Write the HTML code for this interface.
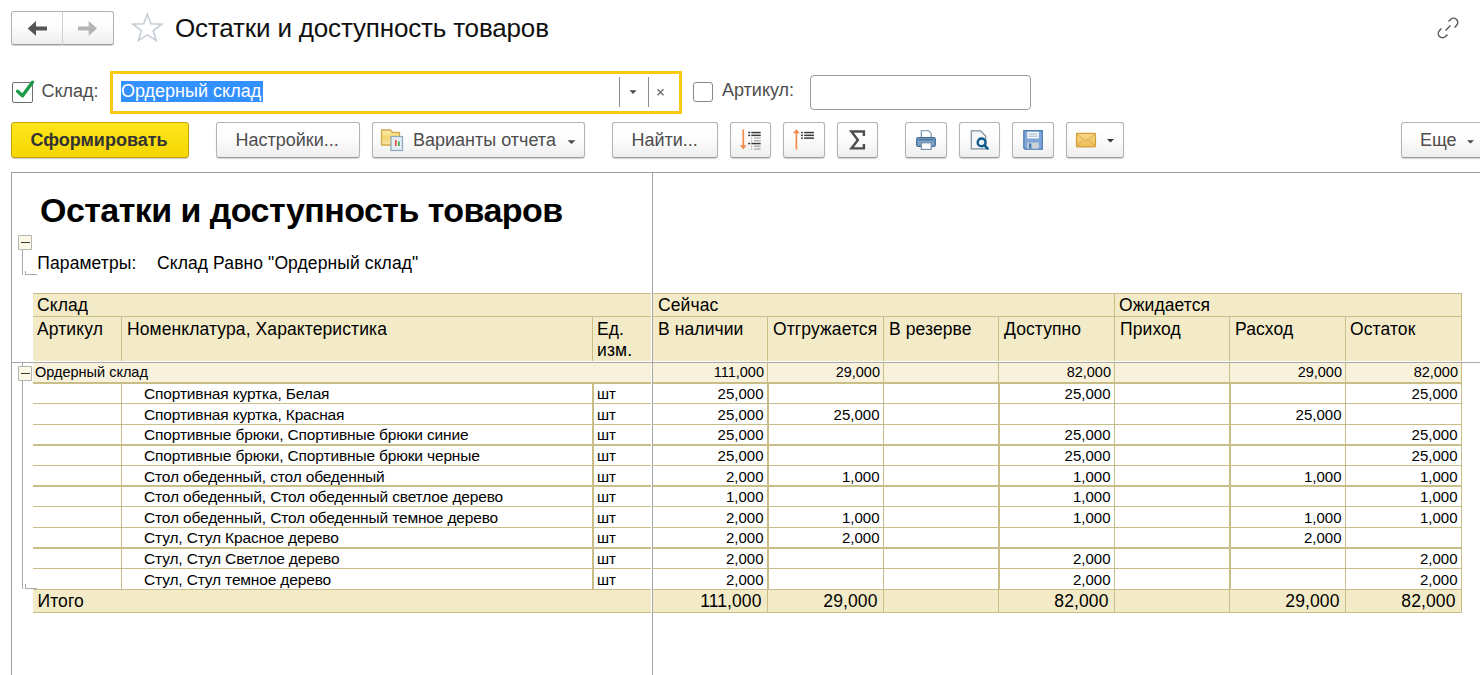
<!DOCTYPE html>
<html><head><meta charset="utf-8"><style>
html,body{margin:0;padding:0;background:#fff;width:1480px;height:675px;overflow:hidden;position:relative;font-family:"Liberation Sans", sans-serif;}
.t{position:absolute;white-space:pre;font-family:"Liberation Sans", sans-serif;}
.btn{position:absolute;box-sizing:border-box;border:1px solid #b3b3b3;border-bottom-color:#9c9c9c;border-radius:3px;background:linear-gradient(#ffffff 0%,#fdfdfd 45%,#eeeeee 100%);box-shadow:0 1px 1px rgba(0,0,0,0.18);}
.ybtn{position:absolute;box-sizing:border-box;border:1px solid #c3a400;border-radius:3px;background:linear-gradient(#fde51c,#f6d600);box-shadow:0 1px 1px rgba(0,0,0,0.2);}
</style></head><body>
<div class="btn" style="left:11px;top:11px;width:103px;height:34px;"></div><div style="position:absolute;left:62px;top:12px;width:1px;height:34px;background:#d0d0d0;"></div><svg style="position:absolute;left:0;top:0" width="120" height="50">
<path d="M27.7 28.4 L36 21 L36 26.4 L47 26.4 L47 30.4 L36 30.4 L36 35.8 Z" fill="#555"/>
<path d="M97 28.4 L88.7 21 L88.7 26.4 L78 26.4 L78 30.4 L88.7 30.4 L88.7 35.8 Z" fill="#b3b3b3"/>
</svg><svg style="position:absolute;left:128px;top:10px" width="38" height="35" viewBox="0 0 38 35">
<path d="M19.3 4.2 L22.9 13.7 L33.8 14.2 L25.2 20.6 L28.2 30.4 L19.3 24.9 L10.4 30.4 L13.4 20.6 L4.8 14.2 L15.7 13.7 Z" fill="none" stroke="#c6cdd4" stroke-width="1.6" stroke-linejoin="miter"/>
</svg><div class="t" style="left:175px;top:15px;font-size:26px;line-height:26px;font-weight:normal;color:#111;letter-spacing:-0.17px;">Остатки и доступность товаров</div><svg style="position:absolute;left:1432px;top:12px" width="32" height="32" viewBox="0 0 32 32">
<g fill="none" stroke="#5c5c5c" stroke-width="1.45" stroke-linecap="butt">
<path d="M16.5 9.5 L18.5 7.5 A4.2 4.2 0 0 1 24.5 13.5 L22.5 15.5"/>
<path d="M15.5 22.5 L13.5 24.5 A4.2 4.2 0 0 1 7.5 18.5 L9.5 16.5"/>
<path d="M13.5 18.5 L18.5 13.5"/>
</g></svg><div style="position:absolute;left:12px;top:82px;width:21px;height:21px;box-sizing:border-box;border:1.5px solid #6f6f6f;border-radius:2px;background:#fff;"></div><svg style="position:absolute;left:8px;top:76px" width="32" height="32" viewBox="0 0 32 32">
<path d="M9.6 15.2 L14.5 19.8 L24.5 6.2" fill="none" stroke="#1d9b48" stroke-width="3.4" stroke-linecap="round" stroke-linejoin="round"/>
</svg><div class="t" style="left:41.5px;top:81.5px;font-size:18px;line-height:18px;font-weight:normal;color:#4d4d4d;">Склад:</div><div style="position:absolute;left:110px;top:71px;width:566px;height:37px;border:3px solid #f9c915;background:#fff;"></div><div style="position:absolute;left:121px;top:81px;width:142px;height:21px;background:#3390ff;"></div><div class="t" style="left:121px;top:81.5px;font-size:18px;line-height:18px;font-weight:normal;color:#fff;">Ордерный склад</div><div style="position:absolute;left:619px;top:77px;width:1px;height:30px;background:#8c8c8c;"></div><div style="position:absolute;left:648px;top:77px;width:1px;height:30px;background:#8c8c8c;"></div><svg style="position:absolute;left:620px;top:80px" width="60" height="24">
<path d="M9.5 10.3 L16.5 10.3 L13 14 Z" fill="#4a4a4a"/>
<path d="M37.5 9.2 L43.5 15.2 M43.5 9.2 L37.5 15.2" stroke="#777" stroke-width="1.6"/>
</svg><div style="position:absolute;left:693px;top:82px;width:18px;height:18px;border:1px solid #888;border-radius:3px;background:#fff;"></div><div class="t" style="left:722px;top:80.5px;font-size:18px;line-height:18px;font-weight:normal;color:#4d4d4d;">Артикул:</div><div style="position:absolute;left:810px;top:75px;width:219px;height:33px;border:1px solid #9a9a9a;border-radius:4px;background:#fff;"></div><div class="ybtn" style="left:11px;top:122px;width:178px;height:36px;"></div><div class="t" style="left:30.5px;top:130.5px;font-size:18px;line-height:18px;font-weight:bold;color:#333;">Сформировать</div><div class="btn" style="left:216px;top:122px;width:144px;height:36px;"></div><div class="t" style="left:235.5px;top:130.5px;font-size:18px;line-height:18px;font-weight:normal;color:#4d4d4d;">Настройки...</div><div class="btn" style="left:372px;top:122px;width:213px;height:36px;"></div><div class="t" style="left:413px;top:130.5px;font-size:18px;line-height:18px;font-weight:normal;color:#4d4d4d;">Варианты отчета</div><svg style="position:absolute;left:378px;top:126px" width="30" height="28" viewBox="0 0 30 28">
<defs><linearGradient id="fg" x1="0" y1="0" x2="0" y2="1"><stop offset="0" stop-color="#fcefb0"/><stop offset="0.5" stop-color="#f2d66e"/><stop offset="1" stop-color="#f7e7a5"/></linearGradient></defs>
<path d="M3.5 4 L12.5 4 L14.5 6.5 L21.5 6.5 L21.5 19 L3.5 19 Z" fill="url(#fg)" stroke="#d2a94a" stroke-width="1.3" stroke-linejoin="round"/>
<rect x="13" y="10.5" width="11.5" height="14" fill="#e3ebf3" stroke="#90a6ba" stroke-width="1.2"/>
<rect x="17" y="14" width="1.6" height="6" fill="#e84a3a"/>
<rect x="20" y="15.5" width="1.8" height="4.5" fill="#4cae4c"/>
</svg><svg style="position:absolute;left:560px;top:134px" width="20" height="12"><path d="M7.5 6.3 L15.5 6.3 L11.5 10 Z" fill="#4a4a4a"/></svg><div class="btn" style="left:612px;top:122px;width:106px;height:36px;"></div><div class="t" style="left:631.5px;top:130.5px;font-size:18px;line-height:18px;font-weight:normal;color:#4d4d4d;">Найти...</div><div class="btn" style="left:730px;top:122px;width:41px;height:36px;"></div><svg style="position:absolute;left:730px;top:122px" width="42" height="36">
<path d="M13.3 7.5 L13.3 26" stroke="#f28a4a" stroke-width="1.7"/>
<path d="M10 23.2 L16.6 23.2 L13.3 27.6 Z" fill="#f28a4a"/>
<g fill="#3a3a3a"><rect x="18.2" y="9.8" width="2" height="1.5"/><rect x="21.3" y="9.8" width="9.4" height="1.5"/>
<rect x="18.2" y="12.6" width="2" height="1.5"/><rect x="21.3" y="12.6" width="9.4" height="1.5"/>
<rect x="18.2" y="20.8" width="2" height="1.5"/><rect x="21.3" y="20.8" width="9.4" height="1.5"/></g>
<g fill="#a8a8a8"><rect x="21" y="15.4" width="1.2" height="1.3"/><rect x="24" y="15.4" width="6.7" height="1.3"/>
<rect x="21" y="18.1" width="1.2" height="1.3"/><rect x="24" y="18.1" width="6.7" height="1.3"/>
<rect x="21" y="23.6" width="1.2" height="1.3"/><rect x="24" y="23.6" width="6.7" height="1.3"/>
<rect x="21" y="26.4" width="1.2" height="1.3"/><rect x="24" y="26.4" width="6.7" height="1.3"/></g>
</svg><div class="btn" style="left:783px;top:122px;width:42px;height:36px;"></div><svg style="position:absolute;left:783px;top:122px" width="42" height="36">
<path d="M13.4 10 L13.4 27.6" stroke="#f28a4a" stroke-width="1.7"/>
<path d="M9.9 11.2 L16.9 11.2 L13.4 7.2 Z" fill="#f28a4a"/>
<g fill="#3a3a3a"><rect x="18.1" y="9.8" width="1.8" height="1.5"/><rect x="21.2" y="9.8" width="9.7" height="1.5"/>
<rect x="18.1" y="12.6" width="1.8" height="1.5"/><rect x="21.2" y="12.6" width="9.7" height="1.5"/>
<rect x="18.1" y="15.4" width="1.8" height="1.5"/><rect x="21.2" y="15.4" width="9.7" height="1.5"/></g>
</svg><div class="btn" style="left:837px;top:122px;width:41px;height:36px;"></div><svg style="position:absolute;left:837px;top:122px" width="42" height="36">
<path d="M26.9 13.9 L26.9 9.5 L14.4 9.5 L20.9 18 L14.4 26.4 L26.9 26.4 L26.9 22" fill="none" stroke="#4d4d4d" stroke-width="2.4" stroke-linejoin="miter"/>
</svg><div class="btn" style="left:905px;top:122px;width:42px;height:36px;"></div><svg style="position:absolute;left:905px;top:122px" width="42" height="36">
<path d="M16.3 8.7 L23.5 8.7 L26.2 11.4 L26.2 16 L16.3 16 Z" fill="#fff" stroke="#6d8aa5" stroke-width="1.1"/>
<rect x="11.7" y="15.6" width="18.6" height="8.8" rx="1.6" fill="#7fa3c8" stroke="#3f6e98" stroke-width="1.3"/>
<rect x="13.5" y="17.2" width="15" height="1.2" fill="#3f6e98"/>
<rect x="16.3" y="20.8" width="9.9" height="6.6" fill="#fff" stroke="#6d8aa5" stroke-width="1.1"/>
</svg><div class="btn" style="left:959px;top:122px;width:41px;height:36px;"></div><svg style="position:absolute;left:959px;top:122px" width="42" height="36">
<path d="M12.3 8.8 L21.5 8.8 L26.7 14 L26.7 26.9 L12.3 26.9 Z" fill="#f4f6f8" stroke="#7d8d9c" stroke-width="1.2"/>
<circle cx="22.6" cy="20.4" r="3.9" fill="#e9f1f7" stroke="#0d5b8c" stroke-width="2.4"/>
<path d="M25.3 23.2 L28.6 26.6" stroke="#0d5b8c" stroke-width="2.6" stroke-linecap="round"/>
</svg><div class="btn" style="left:1012px;top:122px;width:42px;height:36px;"></div><svg style="position:absolute;left:1012px;top:122px" width="42" height="36">
<path d="M11.8 8.6 L30.3 8.6 L30.3 27.2 L13 27.2 L11.8 26 Z" fill="#7ea6d8" stroke="#4b79b2" stroke-width="1.2"/>
<rect x="15.3" y="9.8" width="11.5" height="6.6" fill="#fff"/>
<rect x="16.5" y="11.5" width="9" height="0.9" fill="#88a6c8"/><rect x="16.5" y="13.7" width="9" height="0.9" fill="#88a6c8"/>
<rect x="15.3" y="20.5" width="11.5" height="6.2" fill="#c9d1d6"/>
<rect x="17" y="21.5" width="2.4" height="5.2" fill="#4b79b2"/>
</svg><div class="btn" style="left:1066px;top:122px;width:58px;height:36px;"></div><svg style="position:absolute;left:1066px;top:122px" width="58" height="36">
<defs><linearGradient id="eg" x1="0" y1="0" x2="0" y2="1"><stop offset="0" stop-color="#f7d98b"/><stop offset="1" stop-color="#ecbc55"/></linearGradient></defs>
<rect x="10.5" y="11.3" width="19" height="13.5" rx="0.8" fill="url(#eg)" stroke="#d39d38" stroke-width="1.2"/>
<path d="M11 12 L20 19.3 L29 12 M11 24.3 L17 18.3 M29 24.3 L23 18.3" fill="none" stroke="#d8a445" stroke-width="0.9"/>
<path d="M41 17 L48 17 L44.5 20.6 Z" fill="#333"/>
</svg><div class="btn" style="left:1401px;top:122px;width:100px;height:36px;"></div><div class="t" style="left:1420px;top:130.5px;font-size:18px;line-height:18px;font-weight:normal;color:#4d4d4d;">Еще</div><svg style="position:absolute;left:1460px;top:134px" width="20" height="12"><path d="M7 6.2 L14 6.2 L10.5 9.6 Z" fill="#4a4a4a"/></svg><div style="position:absolute;left:11px;top:172px;width:1469px;height:503px;border-left:1px solid #a0a0a0;border-top:1px solid #a0a0a0;box-sizing:border-box;"></div><div class="t" style="left:40px;top:193px;font-size:34px;line-height:34px;font-weight:bold;color:#000;letter-spacing:-0.55px;">Остатки и доступность товаров</div><div style="position:absolute;left:18px;top:235px;width:14px;height:15px;box-sizing:border-box;border:1px solid #b5b5b5;background:#fbf8e6;border-radius:1px;box-shadow:0 0 1px rgba(0,0,0,0.15);"></div><div style="position:absolute;left:20.5px;top:241.6px;width:9px;height:1.6px;background:#3a3a3a;"></div><div style="position:absolute;left:22px;top:250px;width:1px;height:25px;background:#a9a9a9;"></div><div style="position:absolute;left:25px;top:271px;width:1px;height:4px;background:#a9a9a9;"></div><div style="position:absolute;left:25px;top:274px;width:12px;height:1px;background:#a9a9a9;"></div><div class="t" style="left:37.3px;top:255px;font-size:17.5px;line-height:17.5px;font-weight:normal;color:#000;letter-spacing:0.1px;">Параметры:</div><div class="t" style="left:157px;top:255px;font-size:17.5px;line-height:17.5px;font-weight:normal;color:#000;letter-spacing:0.1px;">Склад Равно "Ордерный склад"</div><div style="position:absolute;left:33px;top:293px;width:1429px;height:68px;background:#f3ebc7;"></div><div style="position:absolute;left:33px;top:293px;width:1429px;height:1px;background:#c9bd88;"></div><div style="position:absolute;left:33px;top:316px;width:1429px;height:1px;background:#c9bd88;"></div><div style="position:absolute;left:121px;top:317px;width:1px;height:44px;background:#c9bd88;"></div><div style="position:absolute;left:592px;top:317px;width:1px;height:44px;background:#c9bd88;"></div><div style="position:absolute;left:767px;top:317px;width:1px;height:44px;background:#c9bd88;"></div><div style="position:absolute;left:883px;top:317px;width:1px;height:44px;background:#c9bd88;"></div><div style="position:absolute;left:998px;top:317px;width:1px;height:44px;background:#c9bd88;"></div><div style="position:absolute;left:1114px;top:317px;width:1px;height:44px;background:#c9bd88;"></div><div style="position:absolute;left:1229px;top:317px;width:1px;height:44px;background:#c9bd88;"></div><div style="position:absolute;left:1345px;top:317px;width:1px;height:44px;background:#c9bd88;"></div><div style="position:absolute;left:1114px;top:293px;width:1px;height:24px;background:#c9bd88;"></div><div style="position:absolute;left:1461px;top:293px;width:1px;height:68px;background:#c9bd88;"></div><div class="t" style="left:37px;top:297px;font-size:17.5px;line-height:17.5px;font-weight:normal;color:#000;letter-spacing:0.1px;">Склад</div><div class="t" style="left:658px;top:297px;font-size:17.5px;line-height:17.5px;font-weight:normal;color:#000;letter-spacing:0.1px;">Сейчас</div><div class="t" style="left:1119px;top:297px;font-size:17.5px;line-height:17.5px;font-weight:normal;color:#000;letter-spacing:0.1px;">Ожидается</div><div class="t" style="left:37px;top:321px;font-size:17.5px;line-height:17.5px;font-weight:normal;color:#000;letter-spacing:0.1px;">Артикул</div><div class="t" style="left:127px;top:321px;font-size:17.5px;line-height:17.5px;font-weight:normal;color:#000;letter-spacing:0.1px;">Номенклатура, Характеристика</div><div class="t" style="left:597px;top:321px;font-size:17.5px;line-height:17.5px;font-weight:normal;color:#000;letter-spacing:0.1px;">Ед.</div><div class="t" style="left:658px;top:321px;font-size:17.5px;line-height:17.5px;font-weight:normal;color:#000;letter-spacing:0.1px;">В наличии</div><div class="t" style="left:773px;top:321px;font-size:17.5px;line-height:17.5px;font-weight:normal;color:#000;letter-spacing:0.1px;">Отгружается</div><div class="t" style="left:889px;top:321px;font-size:17.5px;line-height:17.5px;font-weight:normal;color:#000;letter-spacing:0.1px;">В резерве</div><div class="t" style="left:1004px;top:321px;font-size:17.5px;line-height:17.5px;font-weight:normal;color:#000;letter-spacing:0.1px;">Доступно</div><div class="t" style="left:1120px;top:321px;font-size:17.5px;line-height:17.5px;font-weight:normal;color:#000;letter-spacing:0.1px;">Приход</div><div class="t" style="left:1235px;top:321px;font-size:17.5px;line-height:17.5px;font-weight:normal;color:#000;letter-spacing:0.1px;">Расход</div><div class="t" style="left:1350px;top:321px;font-size:17.5px;line-height:17.5px;font-weight:normal;color:#000;letter-spacing:0.1px;">Остаток</div><div class="t" style="left:597px;top:342px;font-size:17.5px;line-height:17.5px;font-weight:normal;color:#000;letter-spacing:0.1px;">изм.</div><div style="position:absolute;left:33px;top:363px;width:1429px;height:19px;background:#f8f2dd;"></div><div style="position:absolute;left:33px;top:382px;width:1429px;height:2px;background:#c9bd88;"></div><div style="position:absolute;left:767px;top:363px;width:1px;height:19px;background:#c9bd88;"></div><div style="position:absolute;left:883px;top:363px;width:1px;height:19px;background:#c9bd88;"></div><div style="position:absolute;left:998px;top:363px;width:1px;height:19px;background:#c9bd88;"></div><div style="position:absolute;left:1114px;top:363px;width:1px;height:19px;background:#c9bd88;"></div><div style="position:absolute;left:1229px;top:363px;width:1px;height:19px;background:#c9bd88;"></div><div style="position:absolute;left:1345px;top:363px;width:1px;height:19px;background:#c9bd88;"></div><div style="position:absolute;left:1461px;top:363px;width:1px;height:19px;background:#c9bd88;"></div><div style="position:absolute;left:592px;top:363px;width:1px;height:0px;"></div><div style="position:absolute;left:18px;top:366px;width:14px;height:15px;box-sizing:border-box;border:1px solid #b5b5b5;background:#fbf8e6;border-radius:1px;box-shadow:0 0 1px rgba(0,0,0,0.15);"></div><div style="position:absolute;left:20.5px;top:372.6px;width:9px;height:1.6px;background:#3a3a3a;"></div><div style="position:absolute;left:22px;top:363px;width:1px;height:3px;background:#a9a9a9;"></div><div style="position:absolute;left:22px;top:381px;width:1px;height:208px;background:#a9a9a9;"></div><div style="position:absolute;left:25px;top:584px;width:1px;height:5px;background:#a9a9a9;"></div><div style="position:absolute;left:25px;top:588px;width:12px;height:1px;background:#a9a9a9;"></div><div class="t" style="left:35px;top:365px;font-size:14.5px;line-height:14.5px;font-weight:normal;color:#000;">Ордерный склад</div><div class="t" style="right:716px;top:365px;font-size:14.5px;line-height:14.5px;font-weight:normal;color:#000;">111,000</div><div class="t" style="right:600px;top:365px;font-size:14.5px;line-height:14.5px;font-weight:normal;color:#000;">29,000</div><div class="t" style="right:369px;top:365px;font-size:14.5px;line-height:14.5px;font-weight:normal;color:#000;">82,000</div><div class="t" style="right:138px;top:365px;font-size:14.5px;line-height:14.5px;font-weight:normal;color:#000;">29,000</div><div class="t" style="right:22px;top:365px;font-size:14.5px;line-height:14.5px;font-weight:normal;color:#000;">82,000</div><div style="position:absolute;left:33px;top:403px;width:619px;height:1px;background:#c9bd88;"></div><div style="position:absolute;left:653px;top:403px;width:809px;height:1px;background:#c9bd88;"></div><div style="position:absolute;left:33px;top:424px;width:619px;height:1px;background:#c9bd88;"></div><div style="position:absolute;left:653px;top:424px;width:809px;height:1px;background:#c9bd88;"></div><div style="position:absolute;left:33px;top:444px;width:619px;height:2px;background:#c9bd88;"></div><div style="position:absolute;left:653px;top:444px;width:809px;height:2px;background:#c9bd88;"></div><div style="position:absolute;left:33px;top:465px;width:619px;height:1px;background:#c9bd88;"></div><div style="position:absolute;left:653px;top:465px;width:809px;height:1px;background:#c9bd88;"></div><div style="position:absolute;left:33px;top:485px;width:619px;height:2px;background:#c9bd88;"></div><div style="position:absolute;left:653px;top:485px;width:809px;height:2px;background:#c9bd88;"></div><div style="position:absolute;left:33px;top:506px;width:619px;height:1px;background:#c9bd88;"></div><div style="position:absolute;left:653px;top:506px;width:809px;height:1px;background:#c9bd88;"></div><div style="position:absolute;left:33px;top:527px;width:619px;height:1px;background:#c9bd88;"></div><div style="position:absolute;left:653px;top:527px;width:809px;height:1px;background:#c9bd88;"></div><div style="position:absolute;left:33px;top:547px;width:619px;height:2px;background:#c9bd88;"></div><div style="position:absolute;left:653px;top:547px;width:809px;height:2px;background:#c9bd88;"></div><div style="position:absolute;left:33px;top:568px;width:619px;height:1px;background:#c9bd88;"></div><div style="position:absolute;left:653px;top:568px;width:809px;height:1px;background:#c9bd88;"></div><div style="position:absolute;left:33px;top:589px;width:619px;height:1px;background:#c9bd88;"></div><div style="position:absolute;left:653px;top:589px;width:809px;height:1px;background:#c9bd88;"></div><div style="position:absolute;left:121px;top:384px;width:1px;height:205px;background:#c9bd88;"></div><div style="position:absolute;left:592px;top:384px;width:2px;height:205px;background:#c9bd88;"></div><div style="position:absolute;left:767px;top:384px;width:2px;height:205px;background:#c9bd88;"></div><div style="position:absolute;left:883px;top:384px;width:1px;height:205px;background:#c9bd88;"></div><div style="position:absolute;left:998px;top:384px;width:2px;height:205px;background:#c9bd88;"></div><div style="position:absolute;left:1114px;top:384px;width:1px;height:205px;background:#c9bd88;"></div><div style="position:absolute;left:1229px;top:384px;width:2px;height:205px;background:#c9bd88;"></div><div style="position:absolute;left:1345px;top:384px;width:1px;height:205px;background:#c9bd88;"></div><div style="position:absolute;left:1461px;top:384px;width:1px;height:205px;background:#c9bd88;"></div><div class="t" style="left:144px;top:386px;font-size:15.5px;line-height:15.5px;font-weight:normal;color:#000;letter-spacing:-0.15px;">Спортивная куртка, Белая</div><div class="t" style="left:597px;top:386px;font-size:15px;line-height:15px;font-weight:normal;color:#000;">шт</div><div class="t" style="right:716.5px;top:386px;font-size:15px;line-height:15px;font-weight:normal;color:#000;">25,000</div><div class="t" style="right:369.5px;top:386px;font-size:15px;line-height:15px;font-weight:normal;color:#000;">25,000</div><div class="t" style="right:22.5px;top:386px;font-size:15px;line-height:15px;font-weight:normal;color:#000;">25,000</div><div class="t" style="left:144px;top:407px;font-size:15.5px;line-height:15.5px;font-weight:normal;color:#000;letter-spacing:-0.15px;">Спортивная куртка, Красная</div><div class="t" style="left:597px;top:407px;font-size:15px;line-height:15px;font-weight:normal;color:#000;">шт</div><div class="t" style="right:716.5px;top:407px;font-size:15px;line-height:15px;font-weight:normal;color:#000;">25,000</div><div class="t" style="right:600.5px;top:407px;font-size:15px;line-height:15px;font-weight:normal;color:#000;">25,000</div><div class="t" style="right:138.5px;top:407px;font-size:15px;line-height:15px;font-weight:normal;color:#000;">25,000</div><div class="t" style="left:144px;top:427px;font-size:15.5px;line-height:15.5px;font-weight:normal;color:#000;letter-spacing:-0.15px;">Спортивные брюки, Спортивные брюки синие</div><div class="t" style="left:597px;top:427px;font-size:15px;line-height:15px;font-weight:normal;color:#000;">шт</div><div class="t" style="right:716.5px;top:427px;font-size:15px;line-height:15px;font-weight:normal;color:#000;">25,000</div><div class="t" style="right:369.5px;top:427px;font-size:15px;line-height:15px;font-weight:normal;color:#000;">25,000</div><div class="t" style="right:22.5px;top:427px;font-size:15px;line-height:15px;font-weight:normal;color:#000;">25,000</div><div class="t" style="left:144px;top:448px;font-size:15.5px;line-height:15.5px;font-weight:normal;color:#000;letter-spacing:-0.15px;">Спортивные брюки, Спортивные брюки черные</div><div class="t" style="left:597px;top:448px;font-size:15px;line-height:15px;font-weight:normal;color:#000;">шт</div><div class="t" style="right:716.5px;top:448px;font-size:15px;line-height:15px;font-weight:normal;color:#000;">25,000</div><div class="t" style="right:369.5px;top:448px;font-size:15px;line-height:15px;font-weight:normal;color:#000;">25,000</div><div class="t" style="right:22.5px;top:448px;font-size:15px;line-height:15px;font-weight:normal;color:#000;">25,000</div><div class="t" style="left:144px;top:469px;font-size:15.5px;line-height:15.5px;font-weight:normal;color:#000;letter-spacing:-0.15px;">Стол обеденный, стол обеденный</div><div class="t" style="left:597px;top:469px;font-size:15px;line-height:15px;font-weight:normal;color:#000;">шт</div><div class="t" style="right:716.5px;top:469px;font-size:15px;line-height:15px;font-weight:normal;color:#000;">2,000</div><div class="t" style="right:600.5px;top:469px;font-size:15px;line-height:15px;font-weight:normal;color:#000;">1,000</div><div class="t" style="right:369.5px;top:469px;font-size:15px;line-height:15px;font-weight:normal;color:#000;">1,000</div><div class="t" style="right:138.5px;top:469px;font-size:15px;line-height:15px;font-weight:normal;color:#000;">1,000</div><div class="t" style="right:22.5px;top:469px;font-size:15px;line-height:15px;font-weight:normal;color:#000;">1,000</div><div class="t" style="left:144px;top:489px;font-size:15.5px;line-height:15.5px;font-weight:normal;color:#000;letter-spacing:-0.15px;">Стол обеденный, Стол обеденный светлое дерево</div><div class="t" style="left:597px;top:489px;font-size:15px;line-height:15px;font-weight:normal;color:#000;">шт</div><div class="t" style="right:716.5px;top:489px;font-size:15px;line-height:15px;font-weight:normal;color:#000;">1,000</div><div class="t" style="right:369.5px;top:489px;font-size:15px;line-height:15px;font-weight:normal;color:#000;">1,000</div><div class="t" style="right:22.5px;top:489px;font-size:15px;line-height:15px;font-weight:normal;color:#000;">1,000</div><div class="t" style="left:144px;top:510px;font-size:15.5px;line-height:15.5px;font-weight:normal;color:#000;letter-spacing:-0.15px;">Стол обеденный, Стол обеденный темное дерево</div><div class="t" style="left:597px;top:510px;font-size:15px;line-height:15px;font-weight:normal;color:#000;">шт</div><div class="t" style="right:716.5px;top:510px;font-size:15px;line-height:15px;font-weight:normal;color:#000;">2,000</div><div class="t" style="right:600.5px;top:510px;font-size:15px;line-height:15px;font-weight:normal;color:#000;">1,000</div><div class="t" style="right:369.5px;top:510px;font-size:15px;line-height:15px;font-weight:normal;color:#000;">1,000</div><div class="t" style="right:138.5px;top:510px;font-size:15px;line-height:15px;font-weight:normal;color:#000;">1,000</div><div class="t" style="right:22.5px;top:510px;font-size:15px;line-height:15px;font-weight:normal;color:#000;">1,000</div><div class="t" style="left:144px;top:530px;font-size:15.5px;line-height:15.5px;font-weight:normal;color:#000;letter-spacing:-0.15px;">Стул, Стул Красное дерево</div><div class="t" style="left:597px;top:530px;font-size:15px;line-height:15px;font-weight:normal;color:#000;">шт</div><div class="t" style="right:716.5px;top:530px;font-size:15px;line-height:15px;font-weight:normal;color:#000;">2,000</div><div class="t" style="right:600.5px;top:530px;font-size:15px;line-height:15px;font-weight:normal;color:#000;">2,000</div><div class="t" style="right:138.5px;top:530px;font-size:15px;line-height:15px;font-weight:normal;color:#000;">2,000</div><div class="t" style="left:144px;top:551px;font-size:15.5px;line-height:15.5px;font-weight:normal;color:#000;letter-spacing:-0.15px;">Стул, Стул Светлое дерево</div><div class="t" style="left:597px;top:551px;font-size:15px;line-height:15px;font-weight:normal;color:#000;">шт</div><div class="t" style="right:716.5px;top:551px;font-size:15px;line-height:15px;font-weight:normal;color:#000;">2,000</div><div class="t" style="right:369.5px;top:551px;font-size:15px;line-height:15px;font-weight:normal;color:#000;">2,000</div><div class="t" style="right:22.5px;top:551px;font-size:15px;line-height:15px;font-weight:normal;color:#000;">2,000</div><div class="t" style="left:144px;top:572px;font-size:15.5px;line-height:15.5px;font-weight:normal;color:#000;letter-spacing:-0.15px;">Стул, Стул темное дерево</div><div class="t" style="left:597px;top:572px;font-size:15px;line-height:15px;font-weight:normal;color:#000;">шт</div><div class="t" style="right:716.5px;top:572px;font-size:15px;line-height:15px;font-weight:normal;color:#000;">2,000</div><div class="t" style="right:369.5px;top:572px;font-size:15px;line-height:15px;font-weight:normal;color:#000;">2,000</div><div class="t" style="right:22.5px;top:572px;font-size:15px;line-height:15px;font-weight:normal;color:#000;">2,000</div><div style="position:absolute;left:33px;top:590px;width:1429px;height:22px;background:#f3ebc7;"></div><div style="position:absolute;left:33px;top:612px;width:1429px;height:1px;background:#c9bd88;"></div><div style="position:absolute;left:767px;top:590px;width:1px;height:22px;background:#c9bd88;"></div><div style="position:absolute;left:883px;top:590px;width:1px;height:22px;background:#c9bd88;"></div><div style="position:absolute;left:998px;top:590px;width:1px;height:22px;background:#c9bd88;"></div><div style="position:absolute;left:1114px;top:590px;width:1px;height:22px;background:#c9bd88;"></div><div style="position:absolute;left:1229px;top:590px;width:1px;height:22px;background:#c9bd88;"></div><div style="position:absolute;left:1345px;top:590px;width:1px;height:22px;background:#c9bd88;"></div><div style="position:absolute;left:1461px;top:590px;width:1px;height:22px;background:#c9bd88;"></div><div class="t" style="left:37.5px;top:593px;font-size:17.5px;line-height:17.5px;font-weight:normal;color:#000;letter-spacing:0.1px;">Итого</div><div class="t" style="right:718.5px;top:593px;font-size:17.5px;line-height:17.5px;font-weight:normal;color:#000;letter-spacing:0.1px;">111,000</div><div class="t" style="right:602.5px;top:593px;font-size:17.5px;line-height:17.5px;font-weight:normal;color:#000;letter-spacing:0.1px;">29,000</div><div class="t" style="right:371.5px;top:593px;font-size:17.5px;line-height:17.5px;font-weight:normal;color:#000;letter-spacing:0.1px;">82,000</div><div class="t" style="right:140.5px;top:593px;font-size:17.5px;line-height:17.5px;font-weight:normal;color:#000;letter-spacing:0.1px;">29,000</div><div class="t" style="right:24.5px;top:593px;font-size:17.5px;line-height:17.5px;font-weight:normal;color:#000;letter-spacing:0.1px;">82,000</div><div style="position:absolute;left:651px;top:173px;width:1px;height:502px;background:#fff;"></div><div style="position:absolute;left:12px;top:361px;width:1468px;height:1px;background:#fff;"></div><div style="position:absolute;left:652px;top:173px;width:1px;height:502px;background:#a8a8a8;"></div><div style="position:absolute;left:11px;top:362px;width:1469px;height:1px;background:#a8a8a8;"></div>
</body></html>
